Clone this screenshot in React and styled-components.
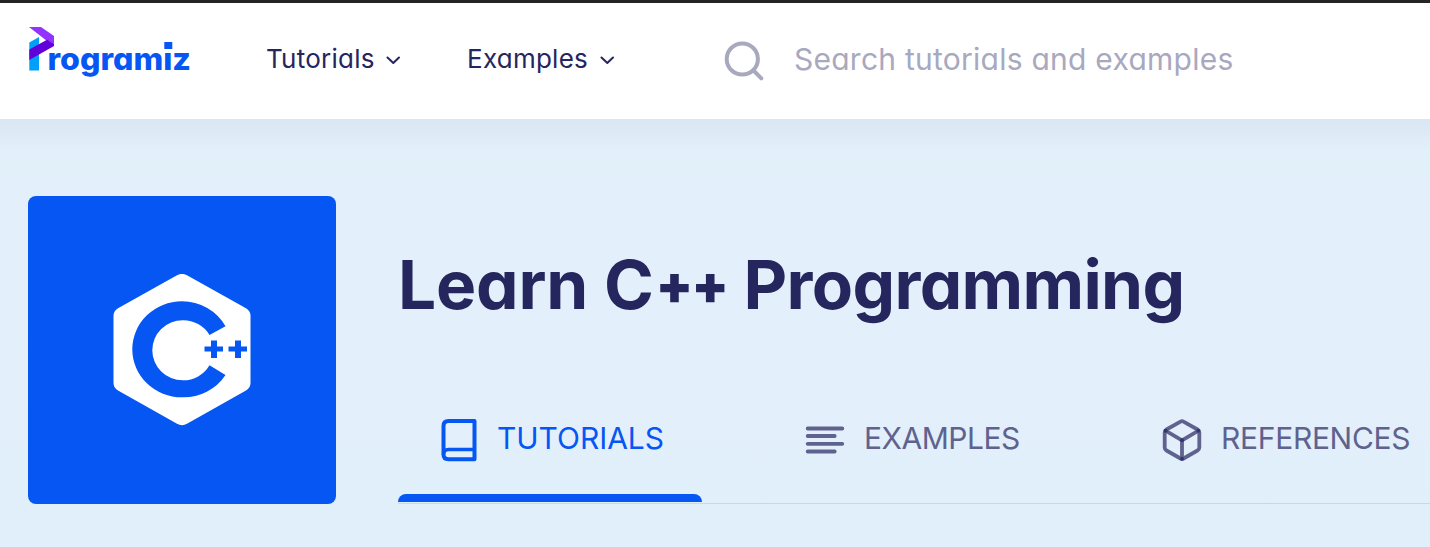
import React from "react";
import styled, { createGlobalStyle } from "styled-components";

const Global = createGlobalStyle`
  * { box-sizing: border-box; }
  body {
    margin: 0;
    overflow: hidden;
    background: #e2effb;
    font-family: Inter, "Liberation Sans", sans-serif;
    font-feature-settings: "cv11" 1;
    color: #25265e;
  }
`;

const Page = styled.div`
  width: 1430px;
  height: 547px;
  overflow: hidden;
`;

const Header = styled.header`
  display: flex;
  align-items: flex-start;
  height: 119px;
  padding-left: 28px;
  background: #fff;
  border-top: 3px solid #262424;
`;

const Logo = styled.svg`
  display: block;
  flex: none;
  width: 166px;
  height: 60px;
  margin-top: 21px;
`;

const Nav = styled.nav`
  display: flex;
  margin-left: 72px;
  padding-top: 36px;
`;

const NavItem = styled.a`
  display: flex;
  align-items: center;
  flex: none;
  width: ${(p) => p.$width}px;
  height: 40px;
  font-size: 26px;
  line-height: 40px;
  letter-spacing: 0.25px;
  white-space: nowrap;

  svg { flex: none; margin-top: 3px; }
`;

const NavLabel = styled.span`
  width: ${(p) => p.$width}px;
`;

const Search = styled.div`
  display: flex;
  align-items: flex-start;
  margin-left: 57px;
  padding-top: 36px;
  color: #a8a8bf;

  svg { flex: none; }
`;

const Placeholder = styled.span`
  margin-left: 28px;
  font-size: 30px;
  line-height: 40px;
  letter-spacing: 0.25px;
  white-space: nowrap;
`;

const Hero = styled.main`
  display: flex;
  height: 428px;
  padding: 77px 0 0 28px;
  background: linear-gradient(#dae6f3 0, #dfeaf6 16px, #e2f0fa 32px, #e3f0fb 60px, #e3f0fb 200px, #e1effa 100%);
`;

const Tile = styled.div`
  display: flex;
  align-items: center;
  justify-content: center;
  flex: none;
  width: 308px;
  height: 308px;
  border-radius: 8px;
  background: #0556f3;
`;

const Content = styled.section`
  display: flex;
  flex-direction: column;
  justify-content: space-between;
  flex: none;
  width: 1032px;
  height: 308px;
  margin-left: 62px;
  border-bottom: 1px solid #c8d8e9;
`;

const Title = styled.h1`
  margin: 47px 0 0;
  height: 84px;
  font-size: 67.5px;
  line-height: 84px;
  font-weight: 750;
  letter-spacing: -0.15px;
  white-space: nowrap;
`;

const Pluses = styled.span`
  margin: 0 0.5px 0 2px;
  font-size: 54px;
  line-height: 1;
  font-weight: 900;
  letter-spacing: -1.8px;
  vertical-align: 5px;
`;

const Subject = styled.span`
  letter-spacing: -0.65px;
`;

const Tabs = styled.div`
  display: flex;
  gap: 62px;
  height: 128px;
`;

const TabItem = styled.div`
  display: flex;
  flex-direction: column;
  flex: none;
  width: ${(p) => p.$width}px;
`;

const Tab = styled.a`
  display: flex;
  align-items: flex-start;
  flex: none;
  height: 119px;
  padding: 41px 0 0 ${(p) => p.$pad}px;
  color: ${(p) => (p.$active ? "#0556f3" : "#5f628e")};
  font-size: 30px;
  font-weight: 385;
  line-height: 44px;
  letter-spacing: ${(p) => p.$spacing}px;
  white-space: nowrap;

  svg { flex: none; margin-right: ${(p) => p.$gap}px; }
`;

const Indicator = styled.div`
  height: 8px;
  border-radius: 8px 8px 0 0;
  background: #0556f3;
`;

const Chevron = () => (
  <svg width="16" height="10" viewBox="0 0 16 10" fill="none" stroke="#25265e" strokeWidth="2" strokeLinecap="round" strokeLinejoin="round">
    <path d="M3.500 1.500 9.300 7 15 1.500" />
  </svg>
);

const LogoMark = () => (
  <Logo viewBox="28 24 166 60">
    <path d="M29.300 42.500 39 37V70.400H29.300Z" fill="#00a0f8" />
    <path d="M29 27H41L54 36V46L47 41Z" fill="#9333ff" />
    <path d="M29.300 49.500 47 39.700 54 44.500V46L29.300 60Z" fill="#6200d9" />
    <text x="47.500" y="70" fontSize="31" fontWeight="800" fill="#0556f3" textLength="143.500" lengthAdjust="spacingAndGlyphs">rogramiz</text>
    <rect x="163" y="45" width="11" height="8" fill="#fff" />
    <rect x="164.300" y="42" width="8" height="7" fill="#0556f3" />
  </Logo>
);

const CppMark = () => (
  <svg width="138" height="152" viewBox="113 274 138 152">
    <path d="M177 275.300Q182 272.500 187 275.300L246 308.200Q250.500 311 250.500 315.500V383Q250.500 388 246 390.500L187 423.800Q182 426.600 177 423.800L118 390.500Q113.500 388 113.500 383V315.500Q113.500 311 118 308.200Z" fill="#fff" />
    <path d="M225.500 326.300A49.700 48 0 0 0 182 301.300A49.700 48 0 0 0 182 397.300A49.700 48 0 0 0 225.500 375L209.500 365.300A30.400 30 0 0 1 182.700 380.300A30.400 30 0 0 1 182.700 320.300A30.400 30 0 0 1 209.500 335Z" fill="#0556f3" />
    <path d="M211 340.500H217V346.500H223V351.500H217V358H211V351.500H204.500V346.500H211ZM235 340.500H241V346.500H247V351.500H241V358H235V351.500H228.500V346.500H235Z" fill="#0556f3" />
  </svg>
);

const BookIcon = () => (
  <svg width="36" height="46" viewBox="441 416 36 46" fill="none" stroke="currentColor" strokeWidth="4" strokeLinejoin="round">
    <path d="M448.500 421H474.500V459.300H448.500Q443.500 459.300 443.500 454.500V426Q443.500 421 448.500 421Z" />
    <path d="M443.500 454.500Q443.500 449.500 448.500 449.500H474.500" strokeWidth="3.500" />
  </svg>
);

const LinesIcon = () => (
  <svg width="40" height="46" viewBox="805 416 40 46" fill="none" stroke="currentColor" strokeWidth="3.800" strokeLinecap="round">
    <path d="M807.700 428.500H842.300M807.700 436H834.700M807.700 443.800H842.300M807.700 451.500H834.700" />
  </svg>
);

const CubeIcon = () => (
  <svg width="40" height="46" viewBox="1162 416 40 46" fill="none" stroke="currentColor" strokeWidth="3.800" strokeLinejoin="round">
    <path d="M1180.500 421.600Q1182 420.700 1183.500 421.600L1197.500 429.500Q1199.300 430.500 1199.300 432.500V447.500Q1199.300 449.500 1197.500 450.500L1183.500 458.500Q1182 459.300 1180.500 458.500L1166.500 450.500Q1164.700 449.500 1164.700 447.500V432.500Q1164.700 430.500 1166.500 429.500Z" />
    <path d="M1165.500 430.700 1182 440.300 1198.500 430.700M1182 440.300V458.500" />
    <g fill="#34366e" stroke="none">
      <circle cx="1165.700" cy="430.700" r="2" />
      <circle cx="1198.300" cy="430.700" r="2" />
      <circle cx="1182" cy="440.300" r="2" />
      <circle cx="1182" cy="458.700" r="2" />
    </g>
  </svg>
);

export default function App() {
  return (
    <Page>
      <Global />
      <Header>
        <LogoMark />
        <Nav>
          <NavItem $width={201}>
            <NavLabel $width={118}>Tutorials</NavLabel>
            <Chevron />
          </NavItem>
          <NavItem $width={200}>
            <NavLabel $width={131}>Examples</NavLabel>
            <Chevron />
          </NavItem>
        </Nav>
        <Search>
          <svg width="42" height="42" viewBox="724 39 42 42" fill="none" stroke="currentColor" strokeWidth="4" strokeLinecap="round">
            <circle cx="742.300" cy="59" r="15.600" />
            <path d="M754 71 761.300 78.300" />
          </svg>
          <Placeholder>Search tutorials and examples</Placeholder>
        </Search>
      </Header>
      <Hero>
        <Tile><CppMark /></Tile>
        <Content>
          <Title>Learn C<Pluses>++</Pluses> <Subject>Programming</Subject></Title>
          <Tabs>
            <TabItem $width={304}>
              <Tab $active $pad={43} $gap={20} $spacing={-0.05}>
                <BookIcon />
                TUTORIALS
              </Tab>
              <Indicator />
            </TabItem>
            <TabItem $width={294}>
              <Tab $pad={41} $gap={19} $spacing={-0.5}>
                <LinesIcon />
                EXAMPLES
              </Tab>
            </TabItem>
            <TabItem $width={310}>
              <Tab $pad={42} $gap={19} $spacing={-0.3}>
                <CubeIcon />
                REFERENCES
              </Tab>
            </TabItem>
          </Tabs>
        </Content>
      </Hero>
    </Page>
  );
}
